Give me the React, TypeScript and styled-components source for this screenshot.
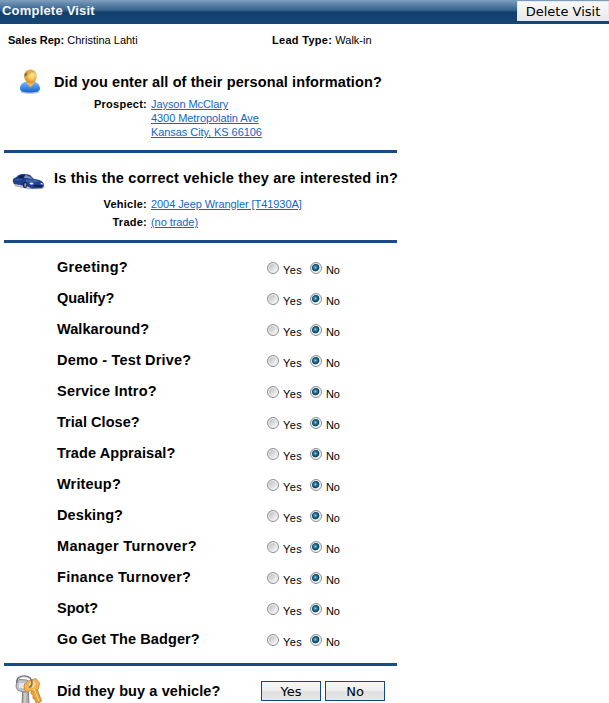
import React from "react";
import styled, { createGlobalStyle } from "styled-components";

const GlobalStyle = createGlobalStyle`
  * { box-sizing: border-box; }
  body {
    margin: 0;
    background: #fff;
    color: #000;
    font-family: "Liberation Sans", Arial, sans-serif;
    overflow: hidden;
  }
`;

const Page = styled.main`
  width: 609px;
  height: 703px;
  overflow: hidden;
  display: flex;
  flex-direction: column;
`;

const TitleBar = styled.header`
  height: 24px;
  flex: none;
  display: flex;
  justify-content: space-between;
  align-items: flex-start;
  padding-left: 2px;
  background: linear-gradient(#7f9fbe 0, #5f86ab 4px, #3f6a94 9px, #2a5782 11px, #113f6b 12px, #144272 17px, #164673 24px);
`;

const Title = styled.h1`
  margin: 0;
  font-size: 13px;
  line-height: 21px;
  letter-spacing: 0.2px;
  color: #f4f8fc;
`;

const PushButton = styled.button<{ $w: number }>`
  width: ${(p) => p.$w}px;
  height: 20px;
  flex: none;
  padding: 0;
  border: 1px solid #16478c;
  border-radius: 0;
  background: linear-gradient(#f6f6f6, #eeeeee 50%, #e0e0e0 52%, #e6e6e6);
  color: #000;
  font: 13px/17px "DejaVu Sans", Verdana, sans-serif;
`;

const DeleteButton = styled(PushButton)`
  margin-top: 1px;
  border-color: #e4e8ef;
  background: linear-gradient(#f8f8f8, #f1f1f1 50%, #e9e9e9);
`;

const Summary = styled.div`
  display: grid;
  grid-template-columns: 264px 1fr;
  flex: none;
  height: 44px;
  padding: 9px 0 0 8px;
  font-size: 11px;
  line-height: 14px;
`;

const SummaryLabel = styled.b<{ $spacing: number }>`
  letter-spacing: ${(p) => p.$spacing}px;
`;

const Section = styled.section<{ $h: number }>`
  width: 393px;
  height: ${(p) => p.$h}px;
  flex: none;
  margin-left: 4px;
  border-bottom: 3px solid #174a87;
`;

const VehicleSection = styled(Section)`
  padding-top: 11px;
`;

const SectionHead = styled.div`
  display: grid;
  grid-template: 28px / 50px 1fr;
  align-items: center;
`;

const Heading = styled.h2<{ $spacing: number }>`
  margin: 0;
  font-size: 14.5px;
  line-height: 18px;
  letter-spacing: ${(p) => p.$spacing}px;
  white-space: nowrap;
`;

const Field = styled.div<{ $top: number }>`
  display: grid;
  grid-template-columns: 143px 1fr;
  column-gap: 4px;
  margin-top: ${(p) => p.$top}px;
  font-size: 11px;
  line-height: 14px;
`;

const FieldLabel = styled.b`
  text-align: right;
  letter-spacing: 0.25px;
`;

const Link = styled.a`
  display: block;
  width: max-content;
  color: #1466c4;
  text-decoration: underline;
  letter-spacing: -0.07px;
`;

const Questions = styled.div`
  width: 393px;
  height: 423px;
  flex: none;
  margin-left: 4px;
  padding-top: 9px;
  border-bottom: 3px solid #174a8f;
`;

const QuestionRow = styled.div`
  display: grid;
  grid-template-columns: 210px 43px 60px;
  height: 31px;
  padding-left: 53px;
  align-items: center;
`;

const QuestionLabel = styled(Heading)`
  padding-bottom: 2px;
`;

const Choice = styled.label`
  display: flex;
  align-items: center;
  height: 20px;
  gap: 4px;
  font-size: 11px;
  line-height: 14px;
`;

const ChoiceText = styled.span<{ $spacing?: number }>`
  padding-top: 4px;
  letter-spacing: ${(p) => p.$spacing ?? 0}px;
`;

const Radio = styled.span<{ $on?: boolean }>`
  width: 12px;
  height: 12px;
  border: 1px solid #8b8e91;
  border-radius: 50%;
  box-shadow: inset 0 0 0 1px #f4f4f4;
  background: ${(p) =>
    p.$on
      ? "radial-gradient(circle at 44% 44%, #8fd0e6 0, #2b7fa3 1.5px, #12425f 3.2px, #2b5a78 3.6px, #eef2f4 4.4px)"
      : "linear-gradient(135deg, #c2c5c9 20%, #f2f2f2 80%)"};
`;

const Footer = styled.footer`
  display: grid;
  grid-template: 24px / 53px 204px 60px 60px;
  flex: none;
  height: 37px;
  margin-left: 4px;
  padding-top: 13px;
  align-items: center;
`;

const NoButton = styled(PushButton)`
  margin-left: 4px;
`;

const IconSlot = styled.span<{ $left: number; $top: number }>`
  display: block;
  align-self: start;
  padding-left: ${(p) => p.$left}px;
  margin-top: ${(p) => p.$top}px;
  svg { display: block; }
`;

const PersonIcon = () => (
  <svg width="22" height="26" viewBox="0 0 22 26">
    <defs>
      <linearGradient id="shirt" x2="0" y2="1">
        <stop stopColor="#82bdf6" /><stop offset=".55" stopColor="#3b8cec" /><stop offset="1" stopColor="#1d61c6" />
      </linearGradient>
      <radialGradient id="face" cx=".62" cy=".4">
        <stop stopColor="#ffe6a2" /><stop offset=".6" stopColor="#f9c658" /><stop offset="1" stopColor="#dd9c30" />
      </radialGradient>
    </defs>
    <ellipse cx="11" cy="23" rx="9.5" ry="1.8" fill="#b9c4d2" />
    <path d="M1 20C1 14.500 4.500 13 8 12.500h6c4 .5 7 3 7 7.500 0 2.500-4 3.500-10 3.500S1 22.500 1 20Z" fill="url(#shirt)" />
    <path d="M8 12h7v2.500L11.500 18.500 8 14.500Z" fill="#f2b94b" />
    <ellipse cx="11.500" cy="7.500" rx="6.200" ry="6.900" fill="url(#face)" />
    <path d="M5.300 9C4.200 4 7 1 11 .8c3 0 5 1 5.900 3-3-1-5.200-.4-6.500 1.500C9.500 6.500 7 6.500 6.800 9Z" fill="#dfad50" />
    <path d="M5.400 7.500 6 4.500l2.500-1-1 3Z" fill="#776b55" />
  </svg>
);

const CarIcon = () => (
  <svg width="33" height="17" viewBox="0 0 33 17">
    <path d="M3 12.500 17 15.500l13-.2 2-2" stroke="#a9adb7" fill="none" strokeWidth="1.500" />
    <path d="M1 6C3 4.500 5 4 6.500 2 9 .5 14 .5 18 2l4 4c5 .5 8 1.500 9.500 4l.5 3-2 2-10 .5-5-2L2 11 .8 8.500Z" fill="#203f91" />
    <path d="M7 3c4-1.500 8-1.200 10.500 0L20 6l-7-.6L6 5Z" fill="#111e4d" />
    <path d="m11.500 5 2-3.200L18 3.500 21 6Z" fill="#6f8dc4" />
    <path d="M14 6.800c5-.5 10 0 14 2l-6 .6-8-.4ZM2 6.500 8 6l2 1-7 .6Z" fill="#4161ae" />
    <path d="m17 10 3-.6 2 1.500-3 .8ZM28.500 10l2 .2.4 1.200-2-.2Z" fill="#e4edff" />
    <path d="m22 12 9 .5-1.500 1.600-7-.3Z" fill="#101c4b" />
    <ellipse cx="13" cy="12" rx="2.200" ry="3" fill="#182143" />
    <ellipse cx="13.300" cy="12" rx="1.100" ry="1.900" fill="#8791aa" />
    <ellipse cx="3" cy="9.200" rx="1.300" ry="2.300" fill="#333e62" />
  </svg>
);

const KeysIcon = () => (
  <svg width="28" height="30" viewBox="0 0 28 30">
    <path d="M8 10h5l1 19-4 2-3-2Z" fill="#aeb2b8" stroke="#777b82" />
    <path d="M1.500 8 4 4.500l8 .5 3 4-1.500 6L9 17l-6-1.500L1 12Z" fill="#bfc2c6" stroke="#888c92" />
    <path d="M4 8h5v5H4Z" fill="#e4e5e6" />
    <path d="m17 12 4-1 5.500 15-3 2.500-2.500-1-1-3-2-1v-3l-2-2Z" fill="#eba23a" stroke="#a86e20" strokeWidth=".7" />
    <path d="m9 10 4-4 8-2.500 3.500 4.500-1 6-5 3-3-1.500-3 2-3-3Z" fill="#f4b24b" stroke="#bf7a25" strokeWidth=".7" />
    <path d="m14 8 5-2 2 3-3 4-4-1Z" fill="#ffd486" />
    <path d="M2 8C1 3 5 1 9 1c5 0 8 3 8 7 0 2-1.500 4-3 4.500" fill="none" stroke="#737880" strokeWidth="1.700" />
    <path d="M3 5C5 1.500 11 1 14 4" fill="none" stroke="#c7cbd1" strokeWidth=".8" />
    <path d="m19 14 5 12M10 18v11" stroke="#ffe0a0" strokeWidth="1" />
  </svg>
);

const questions: { label: string; spacing: number }[] = [
  { label: "Greeting?", spacing: 0.27 },
  { label: "Qualify?", spacing: -0.08 },
  { label: "Walkaround?", spacing: 0.07 },
  { label: "Demo - Test Drive?", spacing: 0.18 },
  { label: "Service Intro?", spacing: 0.23 },
  { label: "Trial Close?", spacing: 0.04 },
  { label: "Trade Appraisal?", spacing: 0.08 },
  { label: "Writeup?", spacing: 0.17 },
  { label: "Desking?", spacing: 0.1 },
  { label: "Manager Turnover?", spacing: 0.33 },
  { label: "Finance Turnover?", spacing: 0.28 },
  { label: "Spot?", spacing: 0 },
  { label: "Go Get The Badger?", spacing: 0.1 },
];

export default function App() {
  return (
    <Page>
      <GlobalStyle />
      <TitleBar>
        <Title>Complete Visit</Title>
        <DeleteButton $w={92}>Delete Visit</DeleteButton>
      </TitleBar>
      <Summary>
        <span><SummaryLabel $spacing={0}>Sales Rep:</SummaryLabel> Christina Lahti</span>
        <span><SummaryLabel $spacing={0.3}>Lead Type:</SummaryLabel> Walk-in</span>
      </Summary>
      <Section $h={85}>
        <SectionHead>
          <IconSlot $left={15} $top={1}><PersonIcon /></IconSlot>
          <Heading $spacing={0.1}>Did you enter all of their personal information?</Heading>
        </SectionHead>
        <Field $top={1}>
          <FieldLabel>Prospect:</FieldLabel>
          <div>
            <Link>Jayson McClary</Link>
            <Link>4300 Metropolatin Ave</Link>
            <Link>Kansas City, KS 66106</Link>
          </div>
        </Field>
      </Section>
      <VehicleSection $h={90}>
        <SectionHead>
          <IconSlot $left={8} $top={9}><CarIcon /></IconSlot>
          <Heading $spacing={0.22}>Is this the correct vehicle they are interested in?</Heading>
        </SectionHead>
        <Field $top={5}>
          <FieldLabel>Vehicle:</FieldLabel>
          <Link>2004 Jeep Wrangler [T41930A]</Link>
        </Field>
        <Field $top={4}>
          <FieldLabel>Trade:</FieldLabel>
          <Link>(no trade)</Link>
        </Field>
      </VehicleSection>
      <Questions>
        {questions.map((q) => (
          <QuestionRow key={q.label}>
            <QuestionLabel $spacing={q.spacing}>{q.label}</QuestionLabel>
            <Choice><Radio /><ChoiceText $spacing={0.4}>Yes</ChoiceText></Choice>
            <Choice><Radio $on /><ChoiceText $spacing={-0.3}>No</ChoiceText></Choice>
          </QuestionRow>
        ))}
      </Questions>
      <Footer>
        <IconSlot $left={11} $top={-4}><KeysIcon /></IconSlot>
        <Heading $spacing={0.1}>Did they buy a vehicle?</Heading>
        <PushButton $w={60}>Yes</PushButton>
        <NoButton $w={60}>No</NoButton>
      </Footer>
    </Page>
  );
}
